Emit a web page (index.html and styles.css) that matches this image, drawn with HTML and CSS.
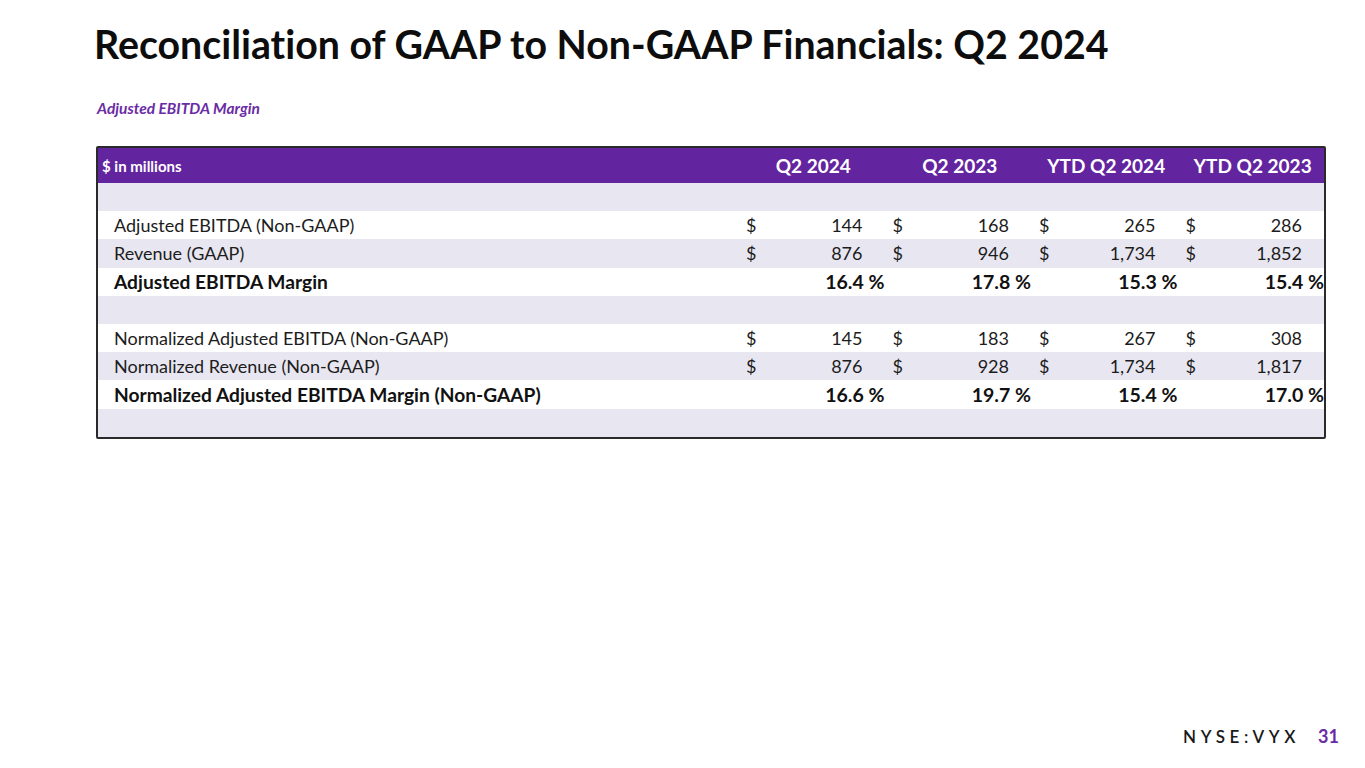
FILE: index.html
```html
<!DOCTYPE html>
<html>
<head>
<meta charset="utf-8">
<link rel="stylesheet" href="styles.css">
</head>
<body>
<div class="slide">
  <h1 class="title">Reconciliation of GAAP to Non-GAAP Financials: Q2 2024</h1>
  <div class="subtitle">Adjusted EBITDA Margin</div>
  <div class="table">
    <div class="row head">
      <div class="label small">$ in millions</div>
      <div class="hcell">Q2 2024</div>
      <div class="hcell">Q2 2023</div>
      <div class="hcell">YTD Q2 2024</div>
      <div class="hcell">YTD Q2 2023</div>
    </div>
    <div class="row shade"><div class="label"></div></div>
    <div class="row">
      <div class="label">Adjusted EBITDA (Non-GAAP)</div>
      <div class="cell"><span>$</span><span>144</span></div>
      <div class="cell"><span>$</span><span>168</span></div>
      <div class="cell"><span>$</span><span>265</span></div>
      <div class="cell"><span>$</span><span>286</span></div>
    </div>
    <div class="row shade">
      <div class="label">Revenue (GAAP)</div>
      <div class="cell"><span>$</span><span>876</span></div>
      <div class="cell"><span>$</span><span>946</span></div>
      <div class="cell"><span>$</span><span>1,734</span></div>
      <div class="cell"><span>$</span><span>1,852</span></div>
    </div>
    <div class="row bold">
      <div class="label">Adjusted EBITDA Margin</div>
      <div class="pct">16.4 %</div>
      <div class="pct">17.8 %</div>
      <div class="pct">15.3 %</div>
      <div class="pct">15.4 %</div>
    </div>
    <div class="row shade"><div class="label"></div></div>
    <div class="row">
      <div class="label">Normalized Adjusted EBITDA (Non-GAAP)</div>
      <div class="cell"><span>$</span><span>145</span></div>
      <div class="cell"><span>$</span><span>183</span></div>
      <div class="cell"><span>$</span><span>267</span></div>
      <div class="cell"><span>$</span><span>308</span></div>
    </div>
    <div class="row shade">
      <div class="label">Normalized Revenue (Non-GAAP)</div>
      <div class="cell"><span>$</span><span>876</span></div>
      <div class="cell"><span>$</span><span>928</span></div>
      <div class="cell"><span>$</span><span>1,734</span></div>
      <div class="cell"><span>$</span><span>1,817</span></div>
    </div>
    <div class="row bold">
      <div class="label">Normalized Adjusted EBITDA Margin (Non-GAAP)</div>
      <div class="pct">16.6 %</div>
      <div class="pct">19.7 %</div>
      <div class="pct">15.4 %</div>
      <div class="pct">17.0 %</div>
    </div>
    <div class="row shade last"><div class="label"></div></div>
  </div>
  <div class="footer">
    <span class="ticker">NYSE:VYX</span>
    <span class="page">31</span>
  </div>
</div>
</body>
</html>
```

FILE: styles.css
```css
html, body {
  margin: 0;
  padding: 0;
  background: #ffffff;
}
body {
  font-family: Lato, "Open Sans", sans-serif;
  color: #1c1c1c;
  font-variant-ligatures: none;
}
.slide {
  width: 1365px;
  height: 768px;
  position: relative;
  box-sizing: border-box;
  padding: 21px 0 0 96px;
  display: flex;
  flex-direction: column;
}
.title {
  margin: 0 0 0 -2px;
  font-size: 39.3px;
  line-height: 46px;
  font-weight: 700;
  color: #0d0d0d;
}
.subtitle {
  margin: 32px 0 0 1px;
  font-size: 15.5px;
  line-height: 19px;
  font-weight: 700;
  font-style: italic;
  color: #6a2ca4;
}
.table {
  margin-top: 28px;
  width: 1230px;
  box-sizing: border-box;
  border: 2px solid #2a2a2a;
  border-radius: 2px;
}
.row {
  display: grid;
  grid-template-columns: 642px repeat(4, 146.5px);
  height: 28.2px;
  align-items: center;
  font-size: 18px;
  background: #ffffff;
}
.row.shade {
  background: #e8e7f1;
}
.row.head {
  height: 35px;
  background: #63249f;
  color: #ffffff;
  font-weight: 700;
}
.label {
  padding-left: 16px;
  white-space: nowrap;
}
.label.small {
  padding-left: 4px;
  font-size: 15px;
}
.hcell {
  text-align: center;
  font-size: 19px;
}
.cell {
  display: flex;
  justify-content: space-between;
  padding: 0 24px 0 6px;
}
.pct {
  text-align: right;
  padding-right: 2px;
  white-space: nowrap;
  font-size: 19.5px;
}
.row.bold {
  font-weight: 700;
  color: #111111;
  font-size: 19.2px;
}
.footer {
  position: absolute;
  right: 26px;
  bottom: 21px;
  display: flex;
  align-items: baseline;
  gap: 18px;
}
.ticker {
  font-size: 17px;
  font-weight: 600;
  letter-spacing: 4.6px;
  color: #1a1a1a;
}
.page {
  font-size: 18px;
  font-weight: 700;
  color: #6a2ca4;
}
```
